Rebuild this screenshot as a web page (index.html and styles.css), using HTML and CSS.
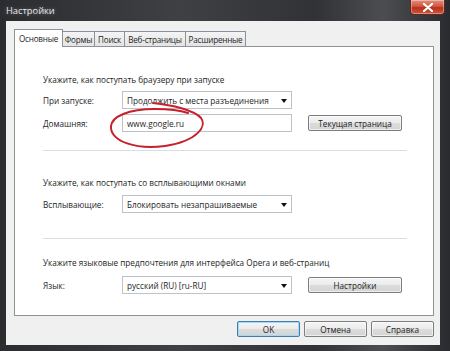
FILE: index.html
```html
<!DOCTYPE html>
<html lang="ru">
<head>
<meta charset="utf-8">
<title>Настройки</title>
<link rel="stylesheet" href="styles.css">
</head>
<body>
<div class="window">
  <div class="titlebar">
    <span class="title">Настройки</span>
    <div class="close">
      <svg width="12" height="9" viewBox="0 0 12 9"><path d="M2 1 L10 8 M10 1 L2 8" stroke="#fff" stroke-width="2.2" stroke-linecap="round"/></svg>
    </div>
  </div>
  <div class="client">
    <div class="tabs">
      <div class="tab active t1">Основные</div>
      <div class="tab t2">Формы</div>
      <div class="tab t3">Поиск</div>
      <div class="tab t4">Веб-страницы</div>
      <div class="tab t5">Расширенные</div>
    </div>
    <div class="panel">
      <div class="heading h1">Укажите, как поступать браузеру при запуске</div>
      <div class="row r1">
        <span class="label">При запуске:</span>
        <div class="combo">Продолжить с места разъединения<span class="arrow"></span></div>
      </div>
      <div class="row r2">
        <span class="label">Домашняя:</span>
        <div class="input">www.google.ru</div>
        <div class="btn side">Текущая страница</div>
      </div>
      <div class="sep s1"></div>
      <div class="heading h2">Укажите, как поступать со всплывающими окнами</div>
      <div class="row r3">
        <span class="label">Всплывающие:</span>
        <div class="combo">Блокировать незапрашиваемые<span class="arrow"></span></div>
      </div>
      <div class="sep s2"></div>
      <div class="heading h3">Укажите языковые предпочтения для интерфейса Opera и веб-страниц</div>
      <div class="row r4">
        <span class="label">Язык:</span>
        <div class="combo">русский (RU) [ru-RU]<span class="arrow"></span></div>
        <div class="btn side">Настройки</div>
      </div>
      <svg class="ellipse" width="100" height="50" viewBox="0 0 100 50">
        <path d="M43 2 C 62 4, 84 9, 91 17 C 97 25, 88 40, 55 45 C 25 49, 2 40, 1 27 C 0 15, 20 8, 45 8 C 60 8, 72 10, 78 12" fill="none" stroke="#c8202a" stroke-width="2" stroke-linecap="round"/>
      </svg>
    </div>
    <div class="buttons">
      <div class="btn dlg default">OK</div>
      <div class="btn dlg">Отмена</div>
      <div class="btn dlg">Справка</div>
    </div>
  </div>
</div>
</body>
</html>
```
FILE: styles.css
```css
* { box-sizing: border-box; }
html, body { margin: 0; padding: 0; }
body {
  width: 450px;
  height: 351px;
  background: #1c1d20;
  font-family: "Open Sans", "Noto Sans", sans-serif;
  font-size: 8.2px;
  color: #1e1e1e;
  overflow: hidden;
}
.window {
  width: 450px;
  height: 351px;
  display: flex;
  flex-direction: column;
  background: linear-gradient(90deg, #2a2c2f 0%, #3e4043 40%, #303235 70%, #4b4d50 85%, #2a2b2e 100%);
}
.titlebar {
  height: 21px;
  position: relative;
  display: flex;
  align-items: center;
  padding-left: 6px;
}
.title {
  color: #e8e8e8;
  font-size: 9.3px;
  text-shadow: 0 0 4px rgba(255,255,255,0.35);
  margin-top: -1px;
}
.close {
  position: absolute;
  left: 410px;
  top: 0;
  width: 35px;
  height: 15px;
  border: 1px solid #5a2a22;
  border-top: none;
  border-radius: 0 0 4px 4px;
  background: linear-gradient(180deg, #e0917f 0%, #d2553f 45%, #b8301c 55%, #cc553c 100%);
  display: flex;
  align-items: center;
  justify-content: center;
  box-shadow: inset 0 0 0 1px rgba(255,255,255,0.35);
}
.client {
  margin: 0 10px 6px 6px;
  flex: 1;
  background: #f0f0f0;
  padding: 8px 6px 8px 8px;
  display: flex;
  flex-direction: column;
}
.tabs {
  height: 17px;
  display: flex;
  align-items: flex-end;
}
.tab {
  height: 15px;
  border: 1px solid #8e9197;
  border-bottom: none;
  margin-left: -1px;
  background: linear-gradient(180deg, #f4f4f4 0%, #e4e4e4 100%);
  display: flex;
  align-items: center;
  justify-content: center;
  white-space: nowrap;
  font-size: 8.1px;
  letter-spacing: -0.2px;
}
.tab.active {
  height: 18px;
  margin-left: 0;
  margin-bottom: -1px;
  background: #fff;
  position: relative;
  z-index: 1;
}
.t1 { width: 49px; }
.t2 { width: 33px; }
.t3 { width: 31px; }
.t4 { width: 62px; }
.t5 { width: 61px; }
.panel {
  height: 270px;
  background: #fff;
  border: 1px solid #8e9197;
  padding: 0 0 0 28px;
  position: relative;
}
.heading {
  height: 14px;
  line-height: 14px;
  white-space: nowrap;
}
.h1 { margin-top: 26px; }
.h2 { margin-top: 25px; }
.h3 { margin-top: 17px; }
.row {
  display: flex;
  align-items: center;
  height: 18px;
}
.r1 { margin-top: 4px; }
.r2 { margin-top: 5px; }
.r3 { margin-top: 5px; }
.r4 { margin-top: 6px; }
.label {
  width: 79px;
  white-space: nowrap;
}
.combo, .input {
  width: 170px;
  height: 18px;
  border: 1px solid #bfc3c8;
  background: #fff;
  padding-left: 4px;
  display: flex;
  align-items: center;
  position: relative;
  white-space: nowrap;
}
.arrow {
  position: absolute;
  right: 4px;
  top: 7px;
  width: 0;
  height: 0;
  border-left: 3px solid transparent;
  border-right: 3px solid transparent;
  border-top: 4px solid #111;
}
.sep {
  width: 364px;
  height: 1px;
  background: #d8dde3;
}
.s1 { margin-top: 18px; }
.s2 { margin-top: 25px; }
.btn {
  height: 16px;
  border: 1px solid #7d7d7d;
  border-radius: 2px;
  background: linear-gradient(180deg, #f6f6f6 0%, #ebebeb 48%, #dcdcdc 52%, #d4d4d4 100%);
  display: flex;
  align-items: center;
  justify-content: center;
  white-space: nowrap;
  box-shadow: inset 0 0 0 1px rgba(255,255,255,0.6);
}
.side {
  width: 94px;
  margin-left: 16px;
}
.ellipse {
  position: absolute;
  left: 95px;
  top: 54px;
}
.buttons {
  margin-top: 5px;
  display: flex;
  justify-content: flex-end;
  gap: 4px;
}
.dlg {
  width: 63px;
}
.default {
  border-color: #3c7fb1;
  box-shadow: inset 0 0 0 1px #a6d8f5;
}
```
